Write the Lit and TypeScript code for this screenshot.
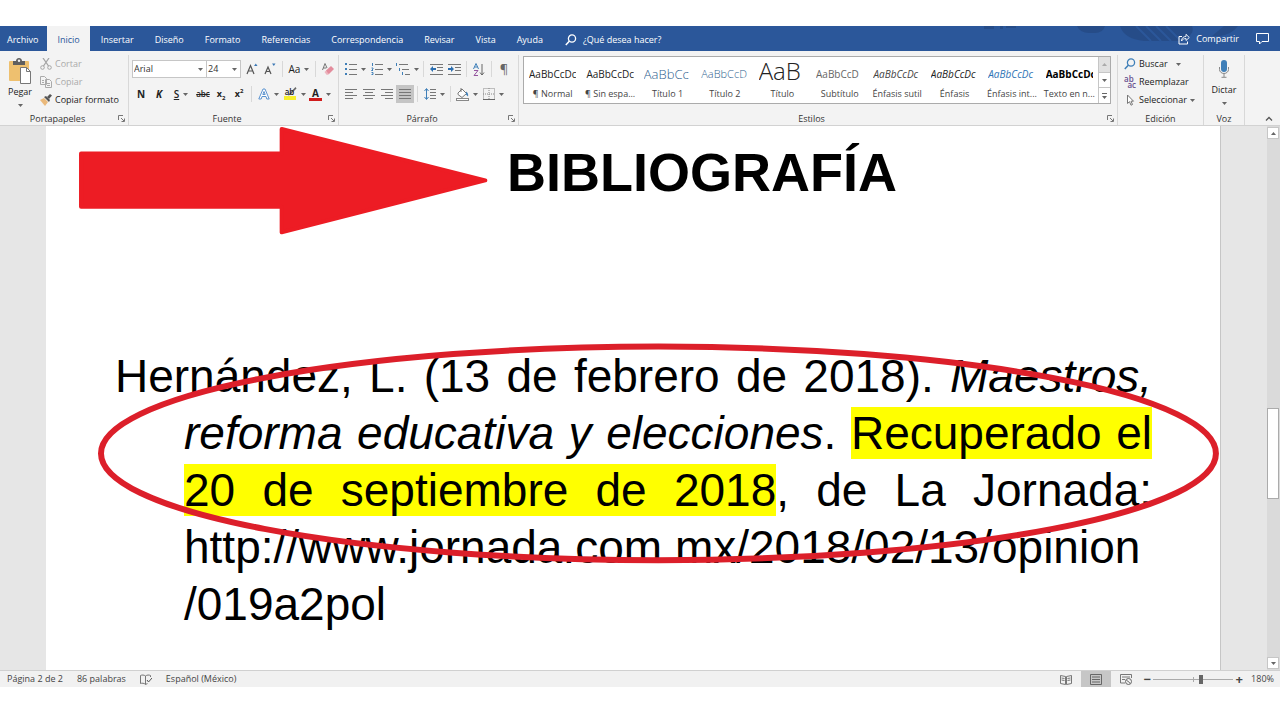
import { LitElement, html, svg, css, nothing } from "lit";
import { customElement } from "lit/decorators.js";
import { classMap } from "lit/directives/class-map.js";

const icon = (w: number, h: number, body: unknown) =>
  html`<svg width=${w} height=${h} viewBox="0 0 ${w} ${h}" aria-hidden="true">${body}</svg>`;

const caret = html`<svg class="caret" width="5" height="3" viewBox="0 0 5 3" aria-hidden="true"><path d="M0 0h5L2.500 3z" fill="#666" /></svg>`;

const launcher = icon(7, 7, svg`<path d="M.5 5V.5H5M3 3l3 3M6.500 3.500v3h-3" fill="none" stroke="#777"/>`);

const lines = (rows: number[][], color = "#777") =>
  rows.map(([x, y, w]) => svg`<rect x=${x} y=${y} width=${w} height="1" fill=${color} />`);

const I = {
  paste: icon(24, 26, svg`<rect x="1" y="3" width="20" height="20" rx="1" fill="#eec06f"/><path d="M5 3h3c0-4 6-4 6 0h3v4H5z" fill="#5f5f5f"/><circle cx="11" cy="2.800" r="1.200" fill="#f1f1f1"/><path d="M12.500 9.500h6l4 4v12h-10z" fill="#fff" stroke="#777"/><path d="M18.500 9.500v4h4" fill="none" stroke="#777"/>`),
  cut: icon(12, 12, svg`<path d="M3 0l5.500 8M9 0L3.500 8" stroke="#a5a5a5" stroke-width="1.300" fill="none"/><circle cx="2.500" cy="9.500" r="1.800" fill="none" stroke="#a5a5a5"/><circle cx="9.500" cy="9.500" r="1.800" fill="none" stroke="#a5a5a5"/>`),
  copy: icon(12, 12, svg`<path d="M.5.500h4l2 2v6h-6zM5.500 3.500h4l2 2v6h-6z" fill="#f4f4f4" stroke="#aaa"/><path d="M2 4.500h2M2 6.500h2M7 7.500h3M7 9.500h3" stroke="#aaa"/>`),
  brush: icon(12, 12, svg`<path d="M0 6l4-2 4 4-3 4z" fill="#eab97b"/><path d="M4 3l2-1 4 4-1 2z" fill="#555"/><path d="M7 3l3-3 2 1.500L9 5z" fill="#555"/>`),
  grow: icon(12, 12, svg`<path d="M1 11L4.500 2.500 8 11M2.300 8h4.400" fill="none" stroke="#555" stroke-width="1.200"/><path d="M8 3l1.800-2.500L11.500 3z" fill="#3c78b5"/>`),
  shrink: icon(12, 12, svg`<path d="M1 11L4 4l3 7M2.200 8.500h3.600" fill="none" stroke="#555" stroke-width="1.200"/><path d="M8 .5h3.500L9.800 3z" fill="#3c78b5"/>`),
  clear: icon(12, 12, svg`<path d="M.5 7L3 .5 5 5M1.300 5h3" fill="none" stroke="#777"/><path d="M4 7.500l5-4.500 3 3-5 5H5z" fill="#e38c9c"/><path d="M2.500 9l1.300-1.200L7 11l-.8.800H4.500z" fill="#edb4be"/>`),
  effects: icon(12, 12, svg`<path d="M.8 11L5 1h2l4.200 10H8.800L8 8.500H4L3.200 11zM4.800 6.500h2.400L6 3.500z" fill="#fff" stroke="#5b93cf"/>`),
  highlight: icon(14, 13, svg`<path d="M12.500 0L6 7l-1 1.500L7 8l6.500-6.500z" fill="#666"/><rect x="1" y="9" width="12" height="4" fill="#f6ee2c"/>`),
  bullets: icon(12, 12, svg`${lines([[4, 1, 8], [4, 6, 8], [4, 11, 8]])}<path d="M0 0h2v2H0zM0 5h2v2H0zM0 10h2v2H0z" fill="#3f7fb8"/>`),
  numbers: icon(12, 12, svg`${lines([[4, 1, 8], [4, 6, 8], [4, 11, 8]])}<path d="M1.500 0v3M.5 5h1.500v1L.5 7.500H2M.5 9.500H2v2H.5" fill="none" stroke="#3f7fb8"/>`),
  levels: icon(14, 12, svg`${lines([[3, 1, 9], [6, 6, 7], [9, 11, 5]])}<path d="M.5 0v3M3.500 5v3M6.500 9v3" stroke="#3f7fb8"/>`),
  outdent: icon(13, 11, svg`${lines([[0, 0, 13], [7, 3, 6], [7, 6, 6], [0, 10, 13]])}<path d="M0 5l3-3v2h3v2H3v2z" fill="#2d6fb0"/>`),
  indent: icon(13, 11, svg`${lines([[0, 0, 13], [7, 3, 6], [7, 6, 6], [0, 10, 13]])}<path d="M6 5L3 2v2H0v2h3v2z" fill="#2d6fb0"/>`),
  sort: icon(12, 13, svg`<path d="M.5 6L3 .5 5.500 6M1.500 4h3" fill="none" stroke="#3f7fb8"/><path d="M1 7.500h4l-4 5h4" fill="none" stroke="#94559f"/><path d="M9 1v11M7 9.500l2 2.500 2-2.500" fill="none" stroke="#666"/>`),
  alignL: icon(12, 10, svg`${lines([[0, 0, 12], [0, 3, 8], [0, 6, 12], [0, 9, 8]])}`),
  alignC: icon(12, 10, svg`${lines([[0, 0, 12], [2, 3, 8], [0, 6, 12], [2, 9, 8]])}`),
  alignR: icon(12, 10, svg`${lines([[0, 0, 12], [4, 3, 8], [0, 6, 12], [4, 9, 8]])}`),
  justify: icon(12, 10, svg`${lines([[0, 0, 12], [0, 3, 12], [0, 6, 12], [0, 9, 12]])}`),
  spacing: icon(12, 12, svg`${lines([[6, 1, 6], [6, 4, 6], [6, 7, 6], [6, 10, 6]])}<path d="M2.500 1v10M.5 3l2-2.500 2 2.500M.5 9l2 2.500 2-2.500" fill="none" stroke="#3f7fb8"/>`),
  bucket: icon(13, 13, svg`<path d="M2 5l4-4 4.500 4.500-4.500 4L2 6.500z" fill="#fff" stroke="#777"/><path d="M10 3.500c2 1 2.500 3 2 5l-2-2z" fill="#3f7fb8"/><path d="M5 4V0" stroke="#777"/><rect x=".5" y="10.500" width="12" height="2" fill="#fff" stroke="#888"/>`),
  borders: icon(12, 12, svg`<path d="M.5.500h11v11H.5zM6 0v12M0 6h12" fill="none" stroke="#888" stroke-dasharray="1 1"/><path d="M0 11.500h12" stroke="#666"/>`),
  search: icon(12, 12, svg`<circle cx="7" cy="4.500" r="3.600" fill="none" stroke="currentColor" stroke-width="1.300"/><path d="M4.500 7L.8 11" stroke="currentColor" stroke-width="1.500"/>`),
  pointer: icon(12, 12, svg`<path d="M3.500 1v8.500l2-1.800 1.500 3.500 1.500-.7L7 7.200h2.500z" fill="#fff" stroke="#777"/>`),
  mic: icon(12, 18, svg`<rect x="3" y="0" width="6" height="12" rx="3" fill="#3f7fb8"/><path d="M1.500 7v2.500a4.500 4 0 0 0 9 0V7M6 13.500V17M3.500 17.300h5" fill="none" stroke="#888"/>`),
  share: icon(12, 12, svg`<path d="M4 3.500H1v7.500h8.500V8.500" fill="none" stroke="#fff"/><path d="M3.500 8c0-3 2-4.500 4.500-4.500V1.300L11.300 4.500 8 7.500V5.500c-2 0-3.500.8-4.500 2.500z" fill="none" stroke="#fff" stroke-width=".9"/>`),
  comment: icon(13, 12, svg`<path d="M.5.500h12v8H6l-2.500 2.500V8.500h-3z" fill="none" stroke="#fff"/>`),
  proof: icon(12, 11, svg`<path d="M5.500 2v8.500M5.500 2C4 .8 2 .8.500 1.500v8c1.500-.5 3.500-.5 5 .9M5.500 2C7 .8 9 .8 10.500 1.500V3M5.500 10.400l2-.8" fill="none" stroke="#777"/><path d="M7 6l1.500 2L12 4" fill="none" stroke="#555"/>`),
  read: icon(12, 11, svg`<path d="M.5 1.500l5 1v8l-5-1zM11.500 1.500l-5 1v8l5-1z" fill="none" stroke="#777"/><path d="M1.500 4l3 .5M1.500 6l3 .5M10.500 4l-3 .5M10.500 6l-3 .5" stroke="#777"/>`),
  print: icon(12, 11, svg`<path d="M.5.500h11v10H.5zM2 3h8M2 5.500h8M2 8h8" fill="none" stroke="#666"/>`),
  web: icon(12, 11, svg`<path d="M11.500 4V.5H.5v8.500H5M2 3h8M2 5.500h3" fill="none" stroke="#777"/><circle cx="8.500" cy="7.500" r="3" fill="#f1f1f1" stroke="#666"/><path d="M6.500 6.500l2 1 1.500 2" stroke="#666" fill="none"/>`),
};

const TABS = ["Archivo", "Inicio", "Insertar", "Diseño", "Formato", "Referencias", "Correspondencia", "Revisar", "Vista", "Ayuda"];

const STYLES = [
  { name: "¶ Normal", sample: "AaBbCcDc", kind: "" },
  { name: "¶ Sin espa...", sample: "AaBbCcDc", kind: "" },
  { name: "Título 1", sample: "AaBbCc", kind: "h1" },
  { name: "Título 2", sample: "AaBbCcD", kind: "h2" },
  { name: "Título", sample: "AaB", kind: "title" },
  { name: "Subtítulo", sample: "AaBbCcD", kind: "subtitle" },
  { name: "Énfasis sutil", sample: "AaBbCcDc", kind: "soft" },
  { name: "Énfasis", sample: "AaBbCcDc", kind: "em" },
  { name: "Énfasis int...", sample: "AaBbCcDc", kind: "blue" },
  { name: "Texto en n...", sample: "AaBbCcDc", kind: "bold" },
];

@customElement("app-root")
export class AppRoot extends LitElement {
  static styles = css`
    :host { display: flex; flex-direction: column; min-height: 100vh; box-sizing: border-box; padding: 26px 0 33px; background: #fff; color: #222; font: 9px/14px "Open Sans", "Noto Sans", sans-serif; }
    * { box-sizing: border-box; }
    button, select, input { font: inherit; color: inherit; margin: 0; padding: 0; border: 0; background: none; border-radius: 0; }
    button { display: inline-flex; align-items: center; justify-content: center; white-space: nowrap; }
    svg { display: block; flex: none; }

    .tabs { display: flex; height: 25px; background: #2b579a; color: #fff; position: relative; }
    .decor { position: absolute; right: 20px; top: 0; }
    .tab { padding: 2px 10px 0; margin-right: 1px; }
    .tab:first-of-type { padding: 2px 8px 0 7px; }
    .tab.on { background: #f3f3f3; color: #2b579a; }
    .tell { gap: 6px; padding: 2px 0 0 11px; }
    .right { margin-left: auto; display: flex; gap: 17px; padding: 1px 11px 0 0; position: relative; }
    .share { gap: 6px; }

    .ribbon { display: flex; height: 75px; background: #f3f3f3; border-bottom: 1px solid #d2d2d2; }
    .group { display: flex; flex-direction: column; border-right: 1px solid #d8d8d8; margin: 4px 0 0; position: relative; }
    .body { flex: 1; display: flex; min-height: 0; }
    .foot { display: grid; grid-template-columns: 1fr; height: 13px; line-height: 13px; align-items: center; text-align: center; color: #333; }
    .foot.more { grid-template-columns: 1fr 13px; }
    .clip { width: 129px; }
    .font { width: 210px; }
    .para { width: 180px; }
    .styles { flex: 1; min-width: 0; }
    .edit { width: 86px; }
    .voice { width: 41px; }
    .end { flex: none; width: 35px; display: flex; align-items: flex-end; justify-content: center; padding: 0 0 4px 12px; }

    .big { flex-direction: column; justify-content: flex-start; gap: 1px; width: 40px; padding-top: 3px; }
    .big .caret { margin-top: 4px; }
    .voice .big { gap: 5px; padding-top: 5px; }
    .voice .big .caret { margin-top: 0; }
    .stack { display: flex; flex-direction: column; }
    .item { height: 18px; justify-content: flex-start; gap: 3px; }
    .item .caret { margin-left: 4px; }
    .item[disabled] { color: #aaa; }
    .edit .stack { padding-left: 6px; }
    .edit .item .caret { margin-left: 0; }
    .edit .find .caret { margin-left: 5px; }
    .find svg:first-child { color: #3f7fb8; }
    .swap { display: grid; width: 12px; font-size: 8px; line-height: 6px; color: #68508f; font-weight: 600; text-align: left; }
    .swap i { font-style: normal; text-align: right; }

    .rows { flex: 1; display: flex; flex-direction: column; gap: 7px; padding: 5px 0 0 3px; }
    .row { display: flex; height: 18px; align-items: center; }
    .tool { width: 18px; height: 18px; gap: 4px; }
    .tool.drop { width: 26px; }
    .tool.on { background: #c5c5c5; }
    .sep { width: 1px; height: 16px; margin: 0 3px; background: #d8d8d8; }
    .combo { display: grid; grid-template-columns: 1fr 8px; align-items: center; width: 75px; height: 18px; border: 1px solid #c6c6c6; background: #fff; }
    .combo.size { width: 35px; margin-left: -1px; margin-right: 2px; }
    .combo select { grid-area: 1 / 1 / 2 / 3; appearance: none; height: 16px; padding-left: 1px; outline: 0; color: #333; }
    .combo .caret { grid-area: 1 / 2 / 2 / 3; pointer-events: none; }
    .case { font-size: 10px; }
    .b { font-size: 10px; font-weight: 700; }
    .i { font-size: 10px; font-style: italic; font-weight: 700; }
    .u { font-size: 10px; text-decoration: underline; font-weight: 600; }
    .st { text-decoration: line-through; font-size: 8px; font-weight: 600; }
    .sm { font-weight: 700; font-size: 9px; }
    sub, sup { font-size: 6px; line-height: 0; }
    .mark { display: grid; justify-items: center; width: 14px; height: 14px; }
    .mark > * { grid-area: 1 / 1; }
    .mark span { font-size: 8px; line-height: 9px; font-weight: 600; }
    .ink { font-size: 10px; line-height: 10px; font-weight: 700; border-bottom: 3px solid #d01c1c; width: 13px; text-align: center; }
    .pil { font-size: 13px; color: #666; }

    .gallery { flex: 1; min-width: 0; display: flex; height: 48px; margin: 1px 6px 0 4px; border: 1px solid #ababab; background: #fff; }
    .card { flex: 1 1 0; min-width: 0; flex-direction: column; justify-content: flex-end; padding: 0 5px 1px; }
    .sample { width: 100%; height: 28px; line-height: 20px; padding-top: 6px; overflow: hidden; font-size: 10px; color: #222; text-align: left; }
    .name { color: #444; line-height: 16px; }
    .h1 { font-size: 13px; color: #2f5f8f; font-weight: 300; }
    .h2 { font-size: 11px; color: #2f5f8f; font-weight: 300; }
    .title { font-size: 24px; line-height: 26px; font-weight: 300; padding-top: 0; }
    .subtitle { color: #666; }
    .soft, .em, .blue { font-style: italic; }
    .soft { color: #444; }
    .blue { color: #2e74b5; }
    .bold { font-weight: 700; color: #000; }
    .steps { width: 12px; display: flex; flex-direction: column; border-left: 1px solid #c6c6c6; }
    .steps button { flex: 1; }
    .steps button + button { border-top: 1px solid #c6c6c6; }
    .steps button:first-child { background: #e1e1e1; }

    .desk { flex: 1; display: flex; background: #e6e6e6; position: relative; min-height: 0; }
    .page { flex: 1; margin: 0 46px; padding: 15px 68px 0 69px; background: #fff; border-right: 1px solid #c6c6c6; color: #000; font-family: "Liberation Sans", Arial, sans-serif; }
    h1 { margin: 0 0 145px 137px; font-size: 54px; line-height: 62px; text-align: center; }
    p { margin: 0 0 0 69px; text-indent: -69px; font-size: 46px; line-height: 57px; text-align: justify; }
    mark { background: #ff0; color: inherit; }
    .url { white-space: nowrap; color: inherit; text-decoration: none; }
    .ink-layer { position: absolute; inset: 0; width: 100%; height: 100%; pointer-events: none; }
    .bar { width: 13px; display: flex; flex-direction: column; padding: 1px 1px 1px 0; background: #dadada; }
    .bar button { height: 12px; background: #fff; border: 1px solid #c6c6c6; }
    .before { flex: 271; }
    .thumb { flex: 90; background: #fff; border: 1px solid #ababab; }
    .after { flex: 159; }

    .status { display: flex; align-items: center; height: 17px; background: #f1f1f1; border-top: 1px solid #d0d0d0; padding: 0 6px 0 7px; color: #444; }
    .status > span, .status > button { margin-right: 14px; }
    .views { margin-left: auto; display: flex; align-self: stretch; }
    .views button { width: 30px; }
    .views .on { background: #c6c6c6; }
    .zoom { display: flex; align-items: center; }
    .zoom button { width: 12px; font-size: 13px; font-weight: 700; }
    .zoom input { appearance: none; width: 80px; height: 10px; background: linear-gradient(#aaa, #aaa) center / 100% 1px no-repeat, linear-gradient(#aaa, #aaa) center / 1px 5px no-repeat; outline: 0; }
    .zoom input::-webkit-slider-thumb { appearance: none; width: 4px; height: 9px; background: #666; }
    .zoom output { margin-left: 6px; }
    .caret.up { transform: rotate(180deg); }
  `;

  private group(cls: string, name: string, body: unknown, more = true) {
    return html`<section class="group ${cls}" aria-label=${name}>
      <div class="body">${body}</div>
      <div class=${classMap({ foot: true, more })}><span>${name}</span>${more ? html`<button aria-label="Más opciones de ${name}">${launcher}</button>` : nothing}</div>
    </section>`;
  }

  private tool(label: string, content: unknown, drop = false, on = false) {
    return html`<button class=${classMap({ tool: true, drop, on })} aria-label=${label}>${content}${drop ? caret : nothing}</button>`;
  }

  render() {
    const t = this.tool;
    const sep = html`<i class="sep"></i>`;
    return html`
      <nav class="tabs">
        <svg class="decor" width="280" height="25" viewBox="0 0 280 25" aria-hidden="true">
          <g fill="#264c88"><path d="M4 0h10v3H4zM20 0h3v3h-3zM26 0h10v2H26zM97 0h28q-2 7-10 7h-6q-9 0-12-7zM140 0h72q4 10-14 15h-34q-20-2-24-15zM244 0h14q-6 8-18 10h-8z" /></g>
          <path d="M156 0l15 15M166 0l15 15M176 0l15 15M186 0l15 15" stroke="#2b579a" stroke-width="2" />
        </svg>
        ${TABS.map((n) => html`<button class=${classMap({ tab: true, on: n === "Inicio" })}>${n}</button>`)}
        <button class="tell">${I.search}<span>¿Qué desea hacer?</span></button>
        <div class="right">
          <button class="share">${I.share}<span>Compartir</span></button>
          <button aria-label="Comentarios">${I.comment}</button>
        </div>
      </nav>

      <div class="ribbon">
        ${this.group("clip", "Portapapeles", html`
          <button class="big">${I.paste}<span>Pegar</span>${caret}</button>
          <div class="stack">
            <button class="item" disabled>${I.cut}Cortar</button>
            <button class="item" disabled>${I.copy}Copiar</button>
            <button class="item">${I.brush}Copiar formato</button>
          </div>`)}
        ${this.group("font", "Fuente", html`<div class="rows">
          <div class="row">
            <label class="combo"><select aria-label="Fuente"><option>Arial</option></select>${caret}</label>
            <label class="combo size"><select aria-label="Tamaño"><option>24</option></select>${caret}</label>
            ${t("Aumentar tamaño", I.grow)}${t("Reducir tamaño", I.shrink)}${sep}
            ${t("Cambiar mayúsculas", html`<span class="case">Aa</span>`, true)}${sep}
            ${t("Borrar formato", I.clear)}
          </div>
          <div class="row">
            ${t("Negrita", html`<span class="b">N</span>`)}${t("Cursiva", html`<span class="i">K</span>`)}
            ${t("Subrayado", html`<span class="u">S</span>`, true)}
            ${t("Tachado", html`<span class="st">abc</span>`)}
            ${t("Subíndice", html`<span class="sm">x<sub>2</sub></span>`)}${t("Superíndice", html`<span class="sm">x<sup>2</sup></span>`)}${sep}
            ${t("Efectos de texto", I.effects, true)}
            ${t("Resaltado", html`<span class="mark">${I.highlight}<span>ab</span></span>`, true)}
            ${t("Color de fuente", html`<span class="ink">A</span>`, true)}
          </div>
        </div>`)}
        ${this.group("para", "Párrafo", html`<div class="rows">
          <div class="row">
            ${t("Viñetas", I.bullets, true)}${t("Numeración", I.numbers, true)}${t("Lista multinivel", I.levels, true)}${sep}
            ${t("Disminuir sangría", I.outdent)}${t("Aumentar sangría", I.indent)}${sep}
            ${t("Ordenar", I.sort)}${sep}
            ${t("Mostrar todo", html`<span class="pil">¶</span>`)}
          </div>
          <div class="row">
            ${t("Izquierda", I.alignL)}${t("Centrar", I.alignC)}${t("Derecha", I.alignR)}${t("Justificar", I.justify, false, true)}${sep}
            ${t("Interlineado", I.spacing, true)}${sep}
            ${t("Sombreado", I.bucket, true)}${t("Bordes", I.borders, true)}
          </div>
        </div>`)}
        ${this.group("styles", "Estilos", html`<div class="gallery">
          ${STYLES.map((s) => html`<button class="card"><span class="sample ${s.kind}">${s.sample}</span><span class="name">${s.name}</span></button>`)}
          <div class="steps">
            <button aria-label="Fila anterior"><svg class="caret up" width="5" height="3" viewBox="0 0 5 3"><path d="M0 0h5L2.500 3z" fill="#aaa" /></svg></button>
            <button aria-label="Fila siguiente">${caret}</button>
            <button aria-label="Más estilos">${icon(5, 6, svg`<path d="M0 0h5v1H0zM0 3h5L2.500 6z" fill="#666"/>`)}</button>
          </div>
        </div>`)}
        ${this.group("edit", "Edición", html`<div class="stack">
          <button class="item find">${I.search}Buscar ${caret}</button>
          <button class="item"><span class="swap">ab<i>ac</i></span>Reemplazar</button>
          <button class="item">${I.pointer}Seleccionar${caret}</button>
        </div>`, false)}
        ${this.group("voice", "Voz", html`<button class="big">${I.mic}<span>Dictar</span>${caret}</button>`, false)}
        <div class="end"><button aria-label="Contraer la cinta">${icon(8, 5, svg`<path d="M1 4.500l3-3 3 3" fill="none" stroke="#555" stroke-width="1.300"/>`)}</button></div>
      </div>

      <main class="desk">
        <article class="page">
          <h1>BIBLIOGRAFÍA</h1>
          <p>Hernández, L. (13 de febrero de 2018). <em>Maestros, reforma educativa y elecciones</em>. <mark>Recuperado el 20 de septiembre de 2018</mark>, de La Jornada: <a class="url" href="http://www.jornada.com.mx/2018/02/13/opinion/019a2pol">http://www.jornada.com.mx/2018/02/13/opinion<br />/019a2pol</a></p>
        </article>
        <div class="bar">
          <button aria-label="Subir"><svg class="caret up" width="5" height="3" viewBox="0 0 5 3"><path d="M0 0h5L2.500 3z" fill="#666" /></svg></button>
          <i class="before"></i><i class="thumb"></i><i class="after"></i>
          <button aria-label="Bajar">${caret}</button>
        </div>
        <svg class="ink-layer" viewBox="0 0 1280 545" aria-hidden="true">
          <path d="M80 27.500H281V3L485 54.500 281 106.500V81H80z" fill="#ed1c24" stroke="#ed1c24" stroke-width="4" stroke-linejoin="round" />
          <ellipse cx="658.500" cy="328" rx="558.500" ry="107" fill="none" stroke="#dc1f2a" stroke-width="6" />
        </svg>
      </main>

      <footer class="status">
        <span>Página 2 de 2</span><span>86 palabras</span>
        <button aria-label="Revisión">${I.proof}</button><span>Español (México)</span>
        <div class="views">
          <button aria-label="Modo de lectura">${I.read}</button><button class="on" aria-label="Diseño de impresión">${I.print}</button><button aria-label="Diseño web">${I.web}</button>
        </div>
        <div class="zoom">
          <button aria-label="Alejar">−</button>
          <input type="range" aria-label="Zoom" min="0" max="100" value="60" />
          <button aria-label="Acercar">+</button>
          <output>180%</output>
        </div>
      </footer>`;
  }
}
